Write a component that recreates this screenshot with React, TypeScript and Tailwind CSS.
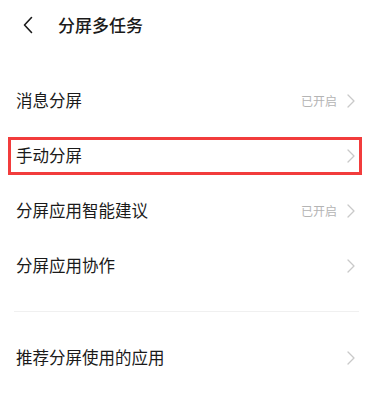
import React from "react";

const rows = [
  { label: "消息分屏", status: "已开启" },
  { label: "手动分屏", status: "", marked: true },
  { label: "分屏应用智能建议", status: "已开启" },
  { label: "分屏应用协作", status: "" },
];

function Chevron() {
  return (
    <svg width="10" height="16" viewBox="0 0 10 16" fill="none" className="shrink-0">
      <path d="M2 2l6 6-6 6" stroke="#c9c9c9" strokeWidth="1.3" strokeLinecap="round" strokeLinejoin="round" />
    </svg>
  );
}

function Row({ label, status, marked }: { label: string; status: string; marked?: boolean }) {
  return (
    <div className="relative flex h-[55px] items-center justify-between pl-4 pr-[17px]">
      <span className="text-[16.5px] text-[#1a1a1a]">{label}</span>
      <div className="flex items-center gap-[9px]">
        {status && <span className="text-[12px] text-[#b4b4b4]">{status}</span>}
        <Chevron />
      </div>
      {/* red annotation box */}
      {marked && (
        <div className="pointer-events-none absolute left-[8px] right-[11px] top-[8.5px] h-[38px] border-[3px] border-[#f23c3c]" />
      )}
    </div>
  );
}

export default function App() {
  return (
    <div
      className="h-[403px] w-[373px] overflow-hidden bg-white"
      style={{ fontFamily: '"Noto Sans CJK SC", "Noto Sans", sans-serif' }}
    >
      <header className="flex h-[50px] items-center pl-[22px]">
        <svg width="12" height="18" viewBox="0 0 12 18" fill="none">
          <path d="M9.5 1.5L2.5 9l7 7.5" stroke="#1a1a1a" strokeWidth="1.6" strokeLinecap="round" strokeLinejoin="round" />
        </svg>
        <h1 className="ml-[24px] text-[17px] font-medium text-[#1a1a1a]">分屏多任务</h1>
      </header>

      <div className="mt-[23px]">
        {rows.map((r) => (
          <Row key={r.label} label={r.label} status={r.status} marked={r.marked} />
        ))}
      </div>

      <div className="mx-[14px] mt-[18px] h-px bg-[#f0f0f0]" />

      <div className="mt-[18px]">
        <Row label="推荐分屏使用的应用" status="" />
      </div>
    </div>
  );
}
